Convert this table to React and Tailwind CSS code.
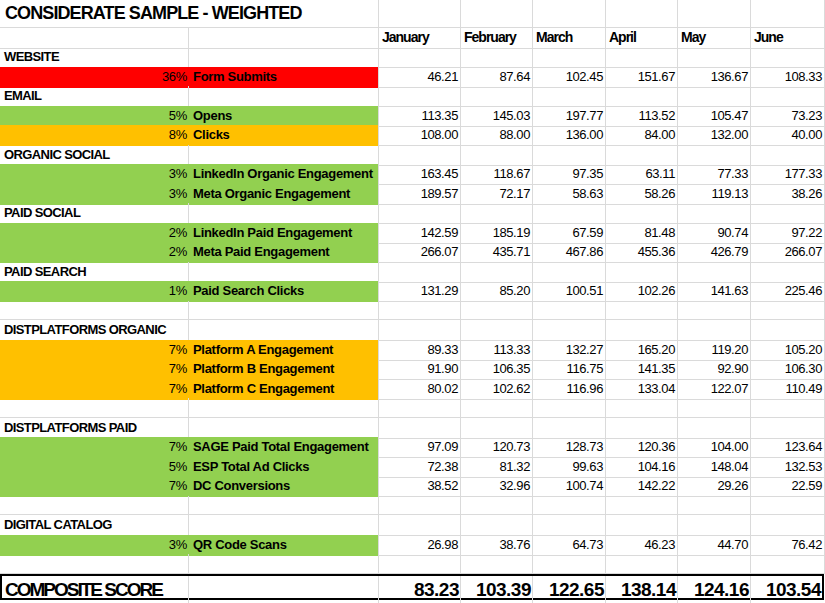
import React from "react";

// Excel-style weighted scorecard
const font = "font-['Liberation_Sans',Arial,sans-serif]";
const cols = "grid grid-cols-[189px_190px_82px_72px_73px_72px_73px_74px]";
const line = "border-r border-b border-[#dadada]";

const months = ["January", "February", "March", "April", "May", "June"];

const fills = {
  red: "bg-[#ff0000] border-[#ff0000]",
  green: "bg-[#92d050] border-[#92d050]",
  orange: "bg-[#ffc000] border-[#ffc000]",
};

const rows = [
  { section: "WEBSITE" },
  { pct: "36%", label: "Form Submits", fill: "red", values: ["46.21", "87.64", "102.45", "151.67", "136.67", "108.33"] },
  { section: "EMAIL" },
  { pct: "5%", label: "Opens", fill: "green", values: ["113.35", "145.03", "197.77", "113.52", "105.47", "73.23"] },
  { pct: "8%", label: "Clicks", fill: "orange", values: ["108.00", "88.00", "136.00", "84.00", "132.00", "40.00"] },
  { section: "ORGANIC SOCIAL" },
  { pct: "3%", label: "LinkedIn Organic Engagement", fill: "green", values: ["163.45", "118.67", "97.35", "63.11", "77.33", "177.33"] },
  { pct: "3%", label: "Meta Organic Engagement", fill: "green", values: ["189.57", "72.17", "58.63", "58.26", "119.13", "38.26"] },
  { section: "PAID SOCIAL" },
  { pct: "2%", label: "LinkedIn Paid Engagement", fill: "green", values: ["142.59", "185.19", "67.59", "81.48", "90.74", "97.22"] },
  { pct: "2%", label: "Meta Paid Engagement", fill: "green", values: ["266.07", "435.71", "467.86", "455.36", "426.79", "266.07"] },
  { section: "PAID SEARCH" },
  { pct: "1%", label: "Paid Search Clicks", fill: "green", values: ["131.29", "85.20", "100.51", "102.26", "141.63", "225.46"] },
  {},
  { section: "DISTPLATFORMS ORGANIC" },
  { pct: "7%", label: "Platform A Engagement", fill: "orange", values: ["89.33", "113.33", "132.27", "165.20", "119.20", "105.20"] },
  { pct: "7%", label: "Platform B Engagement", fill: "orange", values: ["91.90", "106.35", "116.75", "141.35", "92.90", "106.30"] },
  { pct: "7%", label: "Platform C Engagement", fill: "orange", values: ["80.02", "102.62", "116.96", "133.04", "122.07", "110.49"] },
  {},
  { section: "DISTPLATFORMS PAID" },
  { pct: "7%", label: "SAGE Paid Total Engagement", fill: "green", values: ["97.09", "120.73", "128.73", "120.36", "104.00", "123.64"] },
  { pct: "5%", label: "ESP Total Ad Clicks", fill: "green", values: ["72.38", "81.32", "99.63", "104.16", "148.04", "132.53"] },
  { pct: "7%", label: "DC Conversions", fill: "green", values: ["38.52", "32.96", "100.74", "142.22", "29.26", "22.59"] },
  {},
  { section: "DIGITAL CATALOG" },
  { pct: "3%", label: "QR Code Scans", fill: "green", values: ["26.98", "38.76", "64.73", "46.23", "44.70", "76.42"] },
  {},
];

const composite = ["83.23", "103.39", "122.65", "138.14", "124.16", "103.54"];

function DataRow({ row, index }) {
  const height = index % 2 === 0 ? "h-[20px]" : "h-[19px]";
  const fill = row.fill ? fills[row.fill] : "border-[#dadada]";
  const values = row.values || ["", "", "", "", "", ""];

  return (
    <div className={`${cols} ${height}`}>
      {row.section ? (
        <div className={`${line} flex items-center pl-[4px] text-[13px] font-bold tracking-[-0.6px] whitespace-nowrap`}>
          {row.section}
        </div>
      ) : (
        <div className={`border-r border-b ${fill} flex items-center justify-end pr-[1px] text-[13px] tracking-[-0.3px]`}>
          {row.pct}
        </div>
      )}
      <div
        className={`border-r border-b ${row.fill ? fills[row.fill] + " border-r-[#dadada]" : "border-[#dadada]"} flex items-center pl-[4px] text-[13px] font-bold tracking-[-0.3px] whitespace-nowrap`}
      >
        {row.label}
      </div>
      {values.map((v, i) => (
        <div
          key={i}
          className={`${line} flex items-center justify-end pr-[2px] text-[13px] tracking-[-0.4px]`}
        >
          {v}
        </div>
      ))}
    </div>
  );
}

export default function App() {
  return (
    <div className={`${font} w-[825px] h-[603px] overflow-hidden bg-white text-black`}>
      {/* title */}
      <div className={`${cols} h-[27px]`}>
        <div className={`${line} col-span-2 flex items-center pl-[5px] text-[18px] font-bold tracking-[-0.9px] whitespace-nowrap`}>
          CONSIDERATE SAMPLE - WEIGHTED
        </div>
        {months.map((m) => (
          <div key={m} className={line} />
        ))}
      </div>

      {/* month headers */}
      <div className={`${cols} h-[20px]`}>
        <div className={line} />
        <div className={line} />
        {months.map((m) => (
          <div key={m} className={`${line} flex items-center pl-[3px] text-[14px] font-bold tracking-[-1px]`}>
            {m}
          </div>
        ))}
      </div>

      {rows.map((row, i) => (
        <DataRow key={i} row={row} index={i} />
      ))}

      {/* composite score */}
      <div className="w-[824px] h-[26px] border-2 border-black">
        <div className="grid grid-cols-[187px_190px_82px_72px_73px_72px_73px_71px] h-full">
          <div className="border-r border-[#dadada] flex items-center pl-[3px] text-[19px] font-bold tracking-[-2px] whitespace-nowrap">
            COMPOSITE SCORE
          </div>
          <div className="border-r border-[#dadada]" />
          {composite.map((v, i) => (
            <div
              key={i}
              className={`${i < 5 ? "border-r border-[#dadada]" : ""} flex items-center justify-end pr-[1px] text-[19px] font-bold tracking-[-0.5px]`}
            >
              {v}
            </div>
          ))}
        </div>
      </div>
    </div>
  );
}
